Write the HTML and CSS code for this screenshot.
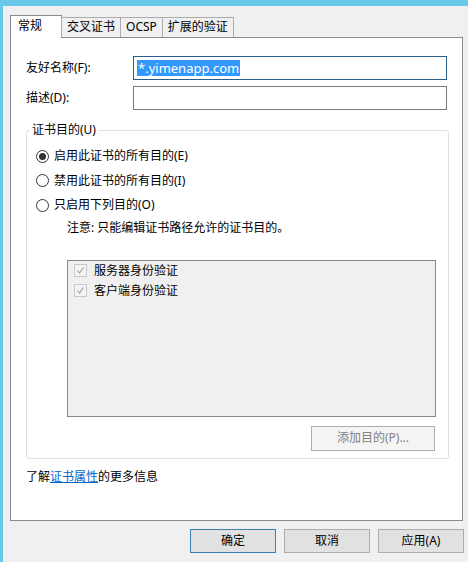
FILE: index.html
```html
<!DOCTYPE html>
<html lang="zh-CN">
    <head>
        <meta charset="UTF-8">
        <meta name="viewport" content="width=device-width, initial-scale=1.0">
        <title>证书属性</title>
        <link rel="stylesheet" href="styles.css">
    </head>
    <body>
        <div class="window">
            <div class="tabs">
                <div class="tab active">常规</div>
                <div class="tab">交叉证书</div>
                <div class="tab">OCSP</div>
                <div class="tab">扩展的验证</div>
            </div>

            <div class="panel">
                <div class="field">
                    <label>友好名称(F):</label>
                    <div class="input focus"><span class="selected">*.yimenapp.com</span></div>
                </div>
                <div class="field">
                    <label>描述(D):</label>
                    <div class="input"></div>
                </div>

                <fieldset class="group">
                    <legend>证书目的(U)</legend>
                    <div class="option"><span class="radio checked"></span>启用此证书的所有目的(E)</div>
                    <div class="option"><span class="radio"></span>禁用此证书的所有目的(I)</div>
                    <div class="option"><span class="radio"></span>只启用下列目的(O)</div>
                    <p class="note">注意: 只能编辑证书路径允许的证书目的。</p>

                    <div class="list">
                        <div class="item">
                            <span class="check"><svg width="11" height="11" viewBox="0 0 11 11"><polyline points="2.5,5.5 4.5,8 8.5,2.5" fill="none" stroke="#a3a3a3" stroke-width="1.2"/></svg></span>
                            服务器身份验证
                        </div>
                        <div class="item">
                            <span class="check"><svg width="11" height="11" viewBox="0 0 11 11"><polyline points="2.5,5.5 4.5,8 8.5,2.5" fill="none" stroke="#a3a3a3" stroke-width="1.2"/></svg></span>
                            客户端身份验证
                        </div>
                    </div>

                    <div class="group-actions">
                        <button class="btn" disabled>添加目的(P)...</button>
                    </div>
                </fieldset>

                <p class="more">了解<a href="#">证书属性</a>的更多信息</p>
            </div>

            <div class="footer">
                <button class="btn default">确定</button>
                <button class="btn">取消</button>
                <button class="btn">应用(A)</button>
            </div>
        </div>
    </body>
</html>
```

FILE: styles.css
```css
* {
    margin: 0;
    padding: 0;
    box-sizing: border-box;
}

body {
    font-family: "Noto Sans", "Noto Sans CJK SC", sans-serif;
    font-size: 12px;
    line-height: 16px;
    color: #000;
    background: #f0f0f0;
    width: 468px;
    height: 562px;
    overflow: hidden;
}

.window {
    height: 562px;
    border-top: 6px solid #69c9ea;
    border-left: 3px solid #69c9ea;
    padding: 9px 0 0 7px;
}

/* Tabs */
.tabs {
    display: flex;
    align-items: flex-end;
    height: 23px;
    margin-bottom: -1px;
    position: relative;
    z-index: 1;
}

.tab {
    height: 20px;
    margin-bottom: 1px;
    margin-left: -1px;
    padding: 0 5px;
    border: 1px solid #acacac;
    border-bottom: none;
    background: #f0f0f0;
    line-height: 18px;
    white-space: nowrap;
}

.tab.active {
    height: 23px;
    width: 52px;
    margin: 0;
    padding: 1px 7px 0;
    border-color: #898c95;
    background: #fff;
}

.tab.active + .tab {
    margin-left: -1px;
}

/* Panel */
.panel {
    width: 453px;
    height: 484px;
    border: 1px solid #898c95;
    background: #fff;
    padding: 0 13px 0 15px;
}

.field {
    display: flex;
    align-items: center;
    margin-top: 6px;
}

.field:first-child {
    margin-top: 18px;
}

.field label {
    width: 107px;
}

.input {
    flex: 1;
    height: 24px;
    margin-right: 2px;
    border: 1px solid #7a7a7a;
    padding: 3px 3px;
    line-height: 16px;
    font-size: 13px;
}

.input.focus {
    border-color: #2a5f8a;
}

.selected {
    background: #3399ff;
    color: #fff;
    display: inline-block;
    padding: 0 1px;
}

/* Group box */
.group {
    margin-top: 12px;
    border: 1px solid #dcdfe3;
    border-radius: 3px;
    padding: 6px 12px 7px 9px;
}

.group legend {
    margin-left: -6px;
    padding: 0 2px;
    line-height: 16px;
}

.option {
    display: flex;
    align-items: center;
    height: 24.5px;
}

.radio {
    width: 13px;
    height: 13px;
    border: 1px solid #333;
    border-radius: 50%;
    background: #fff;
    margin-right: 5px;
    display: flex;
    align-items: center;
    justify-content: center;
}

.radio.checked::after {
    content: '';
    width: 7px;
    height: 7px;
    border-radius: 50%;
    background: #333;
}

.note {
    margin: 2px 0 0 31px;
}

.list {
    margin: 24px 0 0 31px;
    height: 157px;
    border: 1px solid #828790;
    background: #f0f0f0;
    padding: 0 6px;
}

.item {
    display: flex;
    align-items: center;
    height: 20px;
}

.check {
    width: 13px;
    height: 13px;
    border: 1px solid #c8c8c8;
    background: #f4f4f4;
    margin-right: 7px;
    display: flex;
    align-items: center;
    justify-content: center;
}

.group-actions {
    display: flex;
    justify-content: flex-end;
    margin-top: 9px;
    padding-right: 1px;
}

.group-actions .btn {
    width: 124px;
    height: 25px;
}

/* Buttons */
.btn {
    font: inherit;
    width: 86px;
    height: 24px;
    border: 1px solid #adadad;
    background: #e1e1e1;
    color: #000;
}

.btn:disabled {
    background: #f4f4f4;
    color: #838383;
}

.btn.default {
    border-color: #3c7fb1;
}

.more {
    margin-top: 10px;
}

.more a {
    color: #0066cc;
}

.footer {
    display: flex;
    justify-content: flex-end;
    gap: 8px;
    margin-top: 8px;
    padding-right: 4px;
}
```
